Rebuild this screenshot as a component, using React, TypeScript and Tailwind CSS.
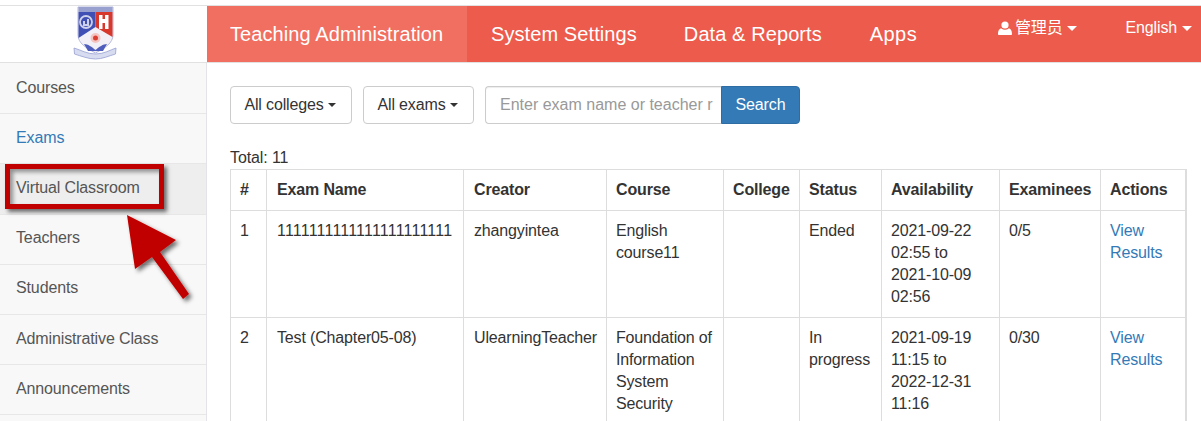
import React from "react";

const side = ["Courses", "Exams", "Virtual Classroom", "Teachers", "Students", "Administrative Class", "Announcements"];
const widths = [36, 197, 143, 117, 76, 82, 118, 101, 85];
const heads = ["#", "Exam Name", "Creator", "Course", "College", "Status", "Availability", "Examinees", "Actions"];
const rows = [
  ["1", "1111111111111111111111", "zhangyintea", "English course11", "", "Ended", ["2021-09-22", "02:55 to", "2021-10-09", "02:56"], "0/5"],
  ["2", "Test (Chapter05-08)", "UlearningTeacher", "Foundation of Information System Security", "", "In progress", ["2021-09-19", "11:15 to", "2022-12-31", "11:16"], "0/30"],
];

function Caret({ className = "" }: { className?: string }) {
  return <span className={`inline-block w-0 h-0 ml-[4px] align-middle border-x-[4px] border-x-transparent border-t-[4px] border-t-current ${className}`} />;
}

function Logo() {
  return (
    <svg width="44" height="54" viewBox="0 0 44 54" className="block blur-[0.5px]">
      <path d="M5 1h35v28c0 8-8 13-17.500 18C13 42 5 37 5 29z" fill="#f2f0f6" stroke="#b4b9dc" />
      <rect x="5.500" y="1" width="34" height="5" fill="#98a0d0" />
      <path d="M5.500 6H22.500V21L5.500 32z" fill="#3f4fb4" />
      <path d="M22.500 6H39.500V31L22.500 21z" fill="#d8372c" />
      <circle cx="13" cy="16" r="6" fill="none" stroke="#cdd1ec" strokeWidth="1.800" />
      <path d="M10 20v-5h2v3h2v-5h2v7z" fill="#cdd1ec" />
      <rect x="26" y="9" width="3.500" height="14" fill="#fff" />
      <rect x="32" y="9" width="3.500" height="14" fill="#fff" />
      <rect x="28" y="13" width="6" height="4" fill="#fff" />
      <circle cx="22.500" cy="32" r="5" fill="#f4c4c0" />
      <circle cx="22.500" cy="32" r="2.500" fill="#dc3d33" />
      <path d="M11 38c4 0 8 3 11.500 6C26 41 30 38 34 38l-4 7H15z" fill="#4f5dbc" />
      <path d="M1 42c7 2 13 6 21.500 6S37 44 43 42l-.5 6c-7 2-13 5-20 5S8 50 1.500 48z" fill="#d8dcf0" stroke="#97a0d2" strokeWidth="0.800" />
    </svg>
  );
}

export default function App() {
  return (
    <div className="relative w-[1201px] h-[421px] overflow-hidden bg-white text-[16px] text-[#333] font-['Liberation_Sans',Arial,sans-serif]">
      <div className="h-[5px] bg-white" />
      <div className="flex h-[58px] border-y border-[#e1e1e1]">
        <div className="w-[207px] shrink-0 flex justify-start items-start pl-[73px] bg-white">
          <Logo />
        </div>
        <div className="flex-1 flex bg-[#ec5b4b] text-white text-[20px] tracking-[0.09px]">
          <div className="w-[260px] pl-[23px] flex items-center bg-[#f06f60]">Teaching Administration</div>
          <div className="pl-[24px] flex items-center">System Settings</div>
          <div className="pl-[47px] flex items-center">Data &amp; Reports</div>
          <div className="pl-[48px] flex items-center tracking-[0.4px]">Apps</div>
          <div className="ml-auto flex items-start pt-[10px] text-[16px] tracking-[-0.15px] font-['Liberation_Sans','Noto_Sans_CJK_SC',sans-serif]">
            <span className="flex items-center">
              <svg width="14" height="15" viewBox="0 0 14 15" className="mr-[3px]" fill="#fff">
                <circle cx="7" cy="4" r="3.600" />
                <path d="M1 14c-.6 0-1-.4-1-1 0-3 1-5.500 3.400-5.500 1 .8 2.300 1.200 3.600 1.200s2.600-.4 3.600-1.200C13 7.500 14 10 14 13c0 .6-.4 1-1 1z" />
              </svg>
              管理员<Caret className="!ml-[4px] !border-x-[5px] !border-t-[5px]" />
            </span>
            <span className="flex items-center ml-[49px] mr-[9px]">English<Caret className="!ml-[5px] !border-x-[5px] !border-t-[5px]" /></span>
          </div>
        </div>
      </div>
      <div className="flex h-[358px]">
        <div className="w-[207px] shrink-0 pt-[1px] bg-[#f8f8f8] border-r border-[#e3e3e8]">
          {side.map((s, i) => (
            <div
              key={s}
              className={`h-[50.2px] pl-[16px] pb-[2px] flex items-center border-b border-[#e7e7e7] text-[16px] tracking-[-0.13px] ${i === 1 ? "text-[#337ab7]" : "text-[#555]"} ${i === 2 ? "bg-[#eeeeee]" : ""}`}
            >
              {s}
            </div>
          ))}
        </div>
        <div className="flex-1 pl-[23px]">
          <div className="flex items-stretch h-[38px] mt-[23px] text-[16px] tracking-[-0.15px]">
            <div className="w-[122px] pr-[2px] flex items-center justify-center border border-[#ccc] rounded-[4px]">All colleges<Caret /></div>
            <div className="w-[111px] ml-[11px] pr-[2px] flex items-center justify-center border border-[#ccc] rounded-[4px]">All exams<Caret /></div>
            <div className="w-[236px] ml-[11px] pl-[14px] flex items-center border border-[#ccc] border-r-0 rounded-l-[4px] text-[#999] tracking-normal overflow-hidden whitespace-nowrap shadow-[inset_0_1px_1px_rgba(0,0,0,0.075)]">Enter exam name or teacher r</div>
            <div className="w-[79px] flex items-center justify-center bg-[#337ab7] border border-[#2e6da4] rounded-r-[4px] text-white">Search</div>
          </div>
          <div className="mt-[24px] h-[21px] leading-[20px] text-[#333] tracking-[-0.1px]">Total: 11</div>
          <table className="w-[955px] table-fixed border-collapse border border-[#ddd] border-r-2 text-[16px] leading-[22px] tracking-[-0.15px]">
            <colgroup>
              {widths.map((w, i) => <col key={i} style={{ width: w }} />)}
            </colgroup>
            <thead>
              <tr>
                {heads.map((h, i) => (
                  <th key={h} className={`border border-[#ddd] ${i === 1 || i === 2 ? "pl-[10px]" : "pl-[9px]"} pr-[4px] pt-[9px] pb-[9px] text-left font-bold align-bottom whitespace-nowrap`}>{h}</th>
                ))}
              </tr>
            </thead>
            <tbody>
              {rows.map((r) => (
                <tr key={r[0] as string}>
                  {r.map((c, i) => (
                    <td key={i} className={`border border-[#ddd] ${i === 1 || i === 2 ? "pl-[10px]" : "pl-[9px]"} pr-[4px] pt-[9px] pb-[9px] align-top ${r[0] === "1" && i === 1 ? "tracking-[0.2px]" : ""}`}>
                      {Array.isArray(c) ? c.map((l) => <div key={l}>{l}</div>) : c}
                    </td>
                  ))}
                  <td className="border border-[#ddd] pl-[9px] pr-[4px] pt-[9px] pb-[9px] align-top text-[#337ab7]">View Results</td>
                </tr>
              ))}
            </tbody>
          </table>
        </div>
      </div>

      <div className="absolute left-[5px] top-[164px] w-[159px] h-[45px] border-[5px] border-[#c00000] shadow-[3px_3px_4px_rgba(0,0,0,0.55),inset_3px_3px_4px_rgba(0,0,0,0.4)]" />
      <svg className="absolute left-[120px] top-[205px]" width="80" height="105" viewBox="0 0 80 105">
        <defs>
          <filter id="s" x="-20%" y="-20%" width="150%" height="150%">
            <feDropShadow dx="3" dy="3" stdDeviation="2" floodColor="#000" floodOpacity="0.55" />
          </filter>
        </defs>
        <path d="M7 10 56 35 40 47 69 89 63 94 32 52 15 64z" fill="#c00000" filter="url(#s)" />
      </svg>
    </div>
  );
}
